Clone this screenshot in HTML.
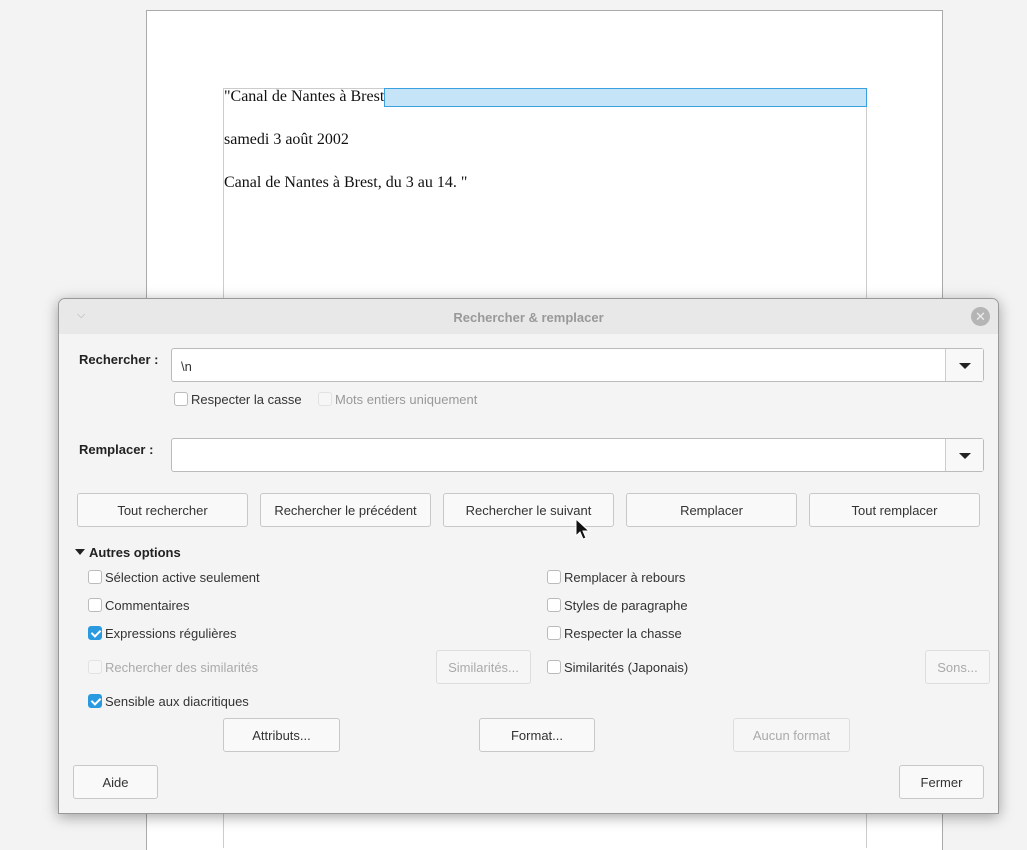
<!DOCTYPE html>
<html><head><meta charset="utf-8"><style>
*{box-sizing:border-box;margin:0;padding:0}
body{width:1027px;height:833px;background:#f3f3f3;position:relative;overflow:hidden;font-family:"Liberation Sans","DejaVu Sans",sans-serif;font-size:13px;color:#333}
.a{position:absolute}
.page{left:146px;top:10px;width:797px;height:840px;background:#fff;border:1px solid #aaa;border-bottom:none}
.margin{left:223px;top:88px;width:644px;height:760px;border-left:1px solid #ccc;border-right:1px solid #ccc;border-top:1px solid #ccc}
.doc{font-family:"Liberation Serif",serif;font-size:16px;color:#111}
.dlg{left:58px;top:298px;width:941px;height:516px;background:#f4f4f4;border:1px solid #999;border-radius:7px 7px 0 0;box-shadow:0 3px 14px rgba(0,0,0,.35);overflow:hidden}
.title{left:0;top:0;width:100%;height:35px;background:#e8e8e8;text-align:center;line-height:37px;font-weight:bold;color:#999}
.btn{position:absolute;height:34px;background:#f9f9f9;border:1px solid #c8c8c8;border-radius:3px;text-align:center;line-height:33px;color:#333}
.dis{color:#aaa;border-color:#ddd;background:#f6f6f6}
.entry{position:absolute;height:34px;background:#fff;border:1px solid #bbb;border-radius:3px}
.dd{position:absolute;right:0;top:0;width:38px;height:32px;border-left:1px solid #ccc;background:#f8f8f8}
.dd:after{content:"";position:absolute;left:13px;top:14px;border-left:6px solid transparent;border-right:6px solid transparent;border-top:6px solid #222}
.cb{position:absolute;width:14px;height:14px;border:1px solid #bbb;border-radius:3px;background:#fff}
.cb.on{background:#2a9ae0;border-color:#2a9ae0}
.cb.on:after{content:"";position:absolute;left:4px;top:1px;width:4px;height:7px;border:solid #fff;border-width:0 2px 2px 0;transform:rotate(45deg)}
.cb.off{border-color:#e2e2e2;background:#f6f6f6}
.lb{position:absolute;line-height:16px;white-space:nowrap}
.b{font-weight:bold;color:#222}
</style></head><body>
<div class="a page"></div>
<div class="a margin"></div>
<div class="a" style="left:384px;top:88px;width:483px;height:19px;background:#c6e4f7;border:1px solid #3aa0e0"></div>
<div class="a doc" style="left:224px;top:88px">"Canal de Nantes à Brest</div>
<div class="a doc" style="left:224px;top:131px">samedi 3 août 2002</div>
<div class="a doc" style="left:224px;top:174px">Canal de Nantes à Brest, du 3 au 14. "</div>

<div class="a dlg">
 <div class="a title">Rechercher &amp; remplacer</div>
 <div class="a" style="left:18px;top:10px;color:#aaa;font-size:11px">⌵</div>
 <div class="a" style="left:912px;top:8px;width:19px;height:19px;border-radius:50%;background:#b5b5b5;color:#eee;text-align:center;line-height:19px;font-size:13px">✕</div>
</div>
<div class="lb b" style="left:79px;top:352px">Rechercher :</div>
<div class="entry" style="left:171px;top:348px;width:813px"><span class="a" style="left:9px;top:10px">\n</span><div class="dd"></div></div>
<div class="cb" style="left:174px;top:392px"></div><div class="lb" style="left:191px;top:392px">Respecter la casse</div>
<div class="cb off" style="left:318px;top:392px"></div><div class="lb" style="left:335px;top:392px;color:#999">Mots entiers uniquement</div>
<div class="lb b" style="left:79px;top:442px">Remplacer :</div>
<div class="entry" style="left:171px;top:438px;width:813px"><div class="dd"></div></div>

<div class="btn" style="left:77px;top:493px;width:171px">Tout rechercher</div>
<div class="btn" style="left:260px;top:493px;width:171px">Rechercher le précédent</div>
<div class="btn" style="left:443px;top:493px;width:171px">Rechercher le suivant</div>
<div class="btn" style="left:626px;top:493px;width:171px">Remplacer</div>
<div class="btn" style="left:809px;top:493px;width:171px">Tout remplacer</div>
<svg class="a" style="left:574px;top:518px" width="20" height="24" viewBox="0 0 20 24"><path d="M2 1 L2 18 L6 14 L9 21 L12 20 L9 13 L15 13 Z" fill="#111" stroke="#fff" stroke-width="1"/></svg>

<div class="a" style="left:75px;top:549px;border-left:5px solid transparent;border-right:5px solid transparent;border-top:6px solid #222"></div>
<div class="lb b" style="left:89px;top:545px">Autres options</div>

<div class="cb" style="left:88px;top:570px"></div><div class="lb" style="left:105px;top:570px">Sélection active seulement</div>
<div class="cb" style="left:88px;top:598px"></div><div class="lb" style="left:105px;top:598px">Commentaires</div>
<div class="cb on" style="left:88px;top:626px"></div><div class="lb" style="left:105px;top:626px">Expressions régulières</div>
<div class="cb off" style="left:88px;top:660px"></div><div class="lb" style="left:105px;top:660px;color:#aaa">Rechercher des similarités</div>
<div class="btn dis" style="left:436px;top:650px;width:95px">Similarités...</div>
<div class="cb on" style="left:88px;top:694px"></div><div class="lb" style="left:105px;top:694px">Sensible aux diacritiques</div>

<div class="cb" style="left:547px;top:570px"></div><div class="lb" style="left:564px;top:570px">Remplacer à rebours</div>
<div class="cb" style="left:547px;top:598px"></div><div class="lb" style="left:564px;top:598px">Styles de paragraphe</div>
<div class="cb" style="left:547px;top:626px"></div><div class="lb" style="left:564px;top:626px">Respecter la chasse</div>
<div class="cb" style="left:547px;top:660px"></div><div class="lb" style="left:564px;top:660px">Similarités (Japonais)</div>
<div class="btn dis" style="left:925px;top:650px;width:65px">Sons...</div>

<div class="btn" style="left:223px;top:718px;width:117px">Attributs...</div>
<div class="btn" style="left:479px;top:718px;width:116px">Format...</div>
<div class="btn dis" style="left:733px;top:718px;width:117px">Aucun format</div>
<div class="btn" style="left:73px;top:765px;width:85px">Aide</div>
<div class="btn" style="left:899px;top:765px;width:85px">Fermer</div>
</body></html>
